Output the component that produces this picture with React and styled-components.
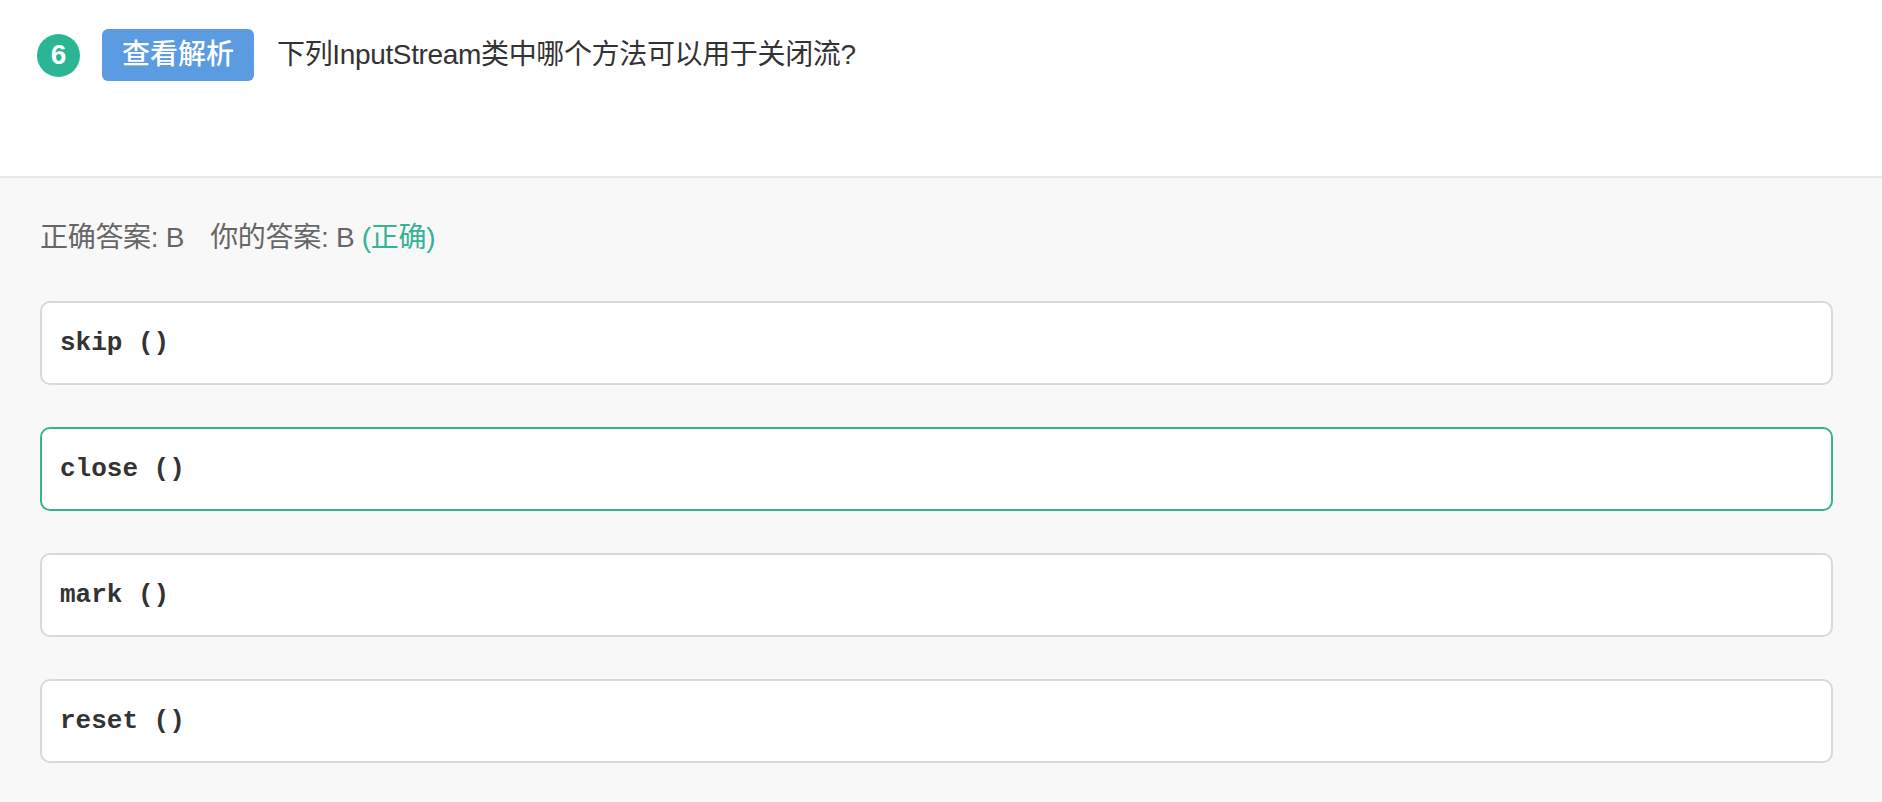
import React from "react";
import styled, { createGlobalStyle } from "styled-components";

const GlobalStyle = createGlobalStyle`
  html, body {
    margin: 0;
    padding: 0;
    background: #f8f8f8;
  }
  * { box-sizing: border-box; }
`;

const Page = styled.div`
  width: 1882px;
  min-height: 802px;
  background: #f8f8f8;
  font-family: "Liberation Sans", Arial, "Noto Sans CJK SC", sans-serif;
`;

const Header = styled.header`
  height: 178px;
  background: #ffffff;
  border-bottom: 2px solid #e8e8e8;
  padding: 29px 0 0 37px;
`;

const TitleRow = styled.div`
  display: flex;
  align-items: center;
  height: 52px;
`;

const NumberBadge = styled.span`
  width: 43px;
  height: 43px;
  border-radius: 50%;
  background: #2bb593;
  color: #ffffff;
  font-size: 28px;
  font-weight: 700;
  display: flex;
  align-items: center;
  justify-content: center;
  flex-shrink: 0;
`;

const AnalysisButton = styled.button`
  margin-left: 22px;
  height: 52px;
  padding: 0 20px;
  border: none;
  border-radius: 6px;
  background: #5b9be1;
  color: #ffffff;
  font-family: "Liberation Sans", Arial, "Noto Sans CJK SC", sans-serif;
  font-size: 28px;
  font-weight: 500;
  line-height: 52px;
  cursor: pointer;
`;

const Question = styled.h2`
  margin: 0 0 0 23px;
  font-size: 28px;
  font-weight: 400;
  letter-spacing: -0.35px;
  color: #333333;
  line-height: 40px;
`;

const Body = styled.section`
  padding: 40px 49px 0 40px;
`;

const AnswerLine = styled.div`
  font-size: 28px;
  line-height: 40px;
  letter-spacing: -0.3px;
  color: #666666;
  display: flex;
  align-items: center;
  margin-bottom: 43px;
`;

const AnswerPart = styled.span`
  margin-right: ${(p) => (p.$gap ? "26px" : "0")};
  white-space: pre;
`;

const Verdict = styled.span`
  color: #35b392;
  white-space: pre;
`;

const OptionList = styled.ul`
  list-style: none;
  margin: 0;
  padding: 0;
  display: flex;
  flex-direction: column;
  gap: 42px;
`;

const Option = styled.li`
  height: 84px;
  background: #ffffff;
  border: 2px solid ${(p) => (p.$selected ? "#33b493" : "#d9d9d9")};
  border-radius: 10px;
  padding: 0 18px;
  display: flex;
  align-items: center;
  font-family: "Liberation Mono", "Courier New", monospace;
  font-weight: 700;
  font-size: 26px;
  color: #333333;
`;

const options = [
  { text: "skip ()", selected: false },
  { text: "close ()", selected: true },
  { text: "mark ()", selected: false },
  { text: "reset ()", selected: false },
];

export default function App() {
  return (
    <Page>
      <GlobalStyle />
      <Header>
        <TitleRow>
          <NumberBadge>6</NumberBadge>
          <AnalysisButton>查看解析</AnalysisButton>
          <Question>下列InputStream类中哪个方法可以用于关闭流?</Question>
        </TitleRow>
      </Header>
      <Body>
        <AnswerLine>
          <AnswerPart $gap>正确答案: B</AnswerPart>
          <AnswerPart>你的答案: B </AnswerPart>
          <Verdict>(正确)</Verdict>
        </AnswerLine>
        <OptionList>
          {options.map((o) => (
            <Option key={o.text} $selected={o.selected}>
              {o.text}
            </Option>
          ))}
        </OptionList>
      </Body>
    </Page>
  );
}
